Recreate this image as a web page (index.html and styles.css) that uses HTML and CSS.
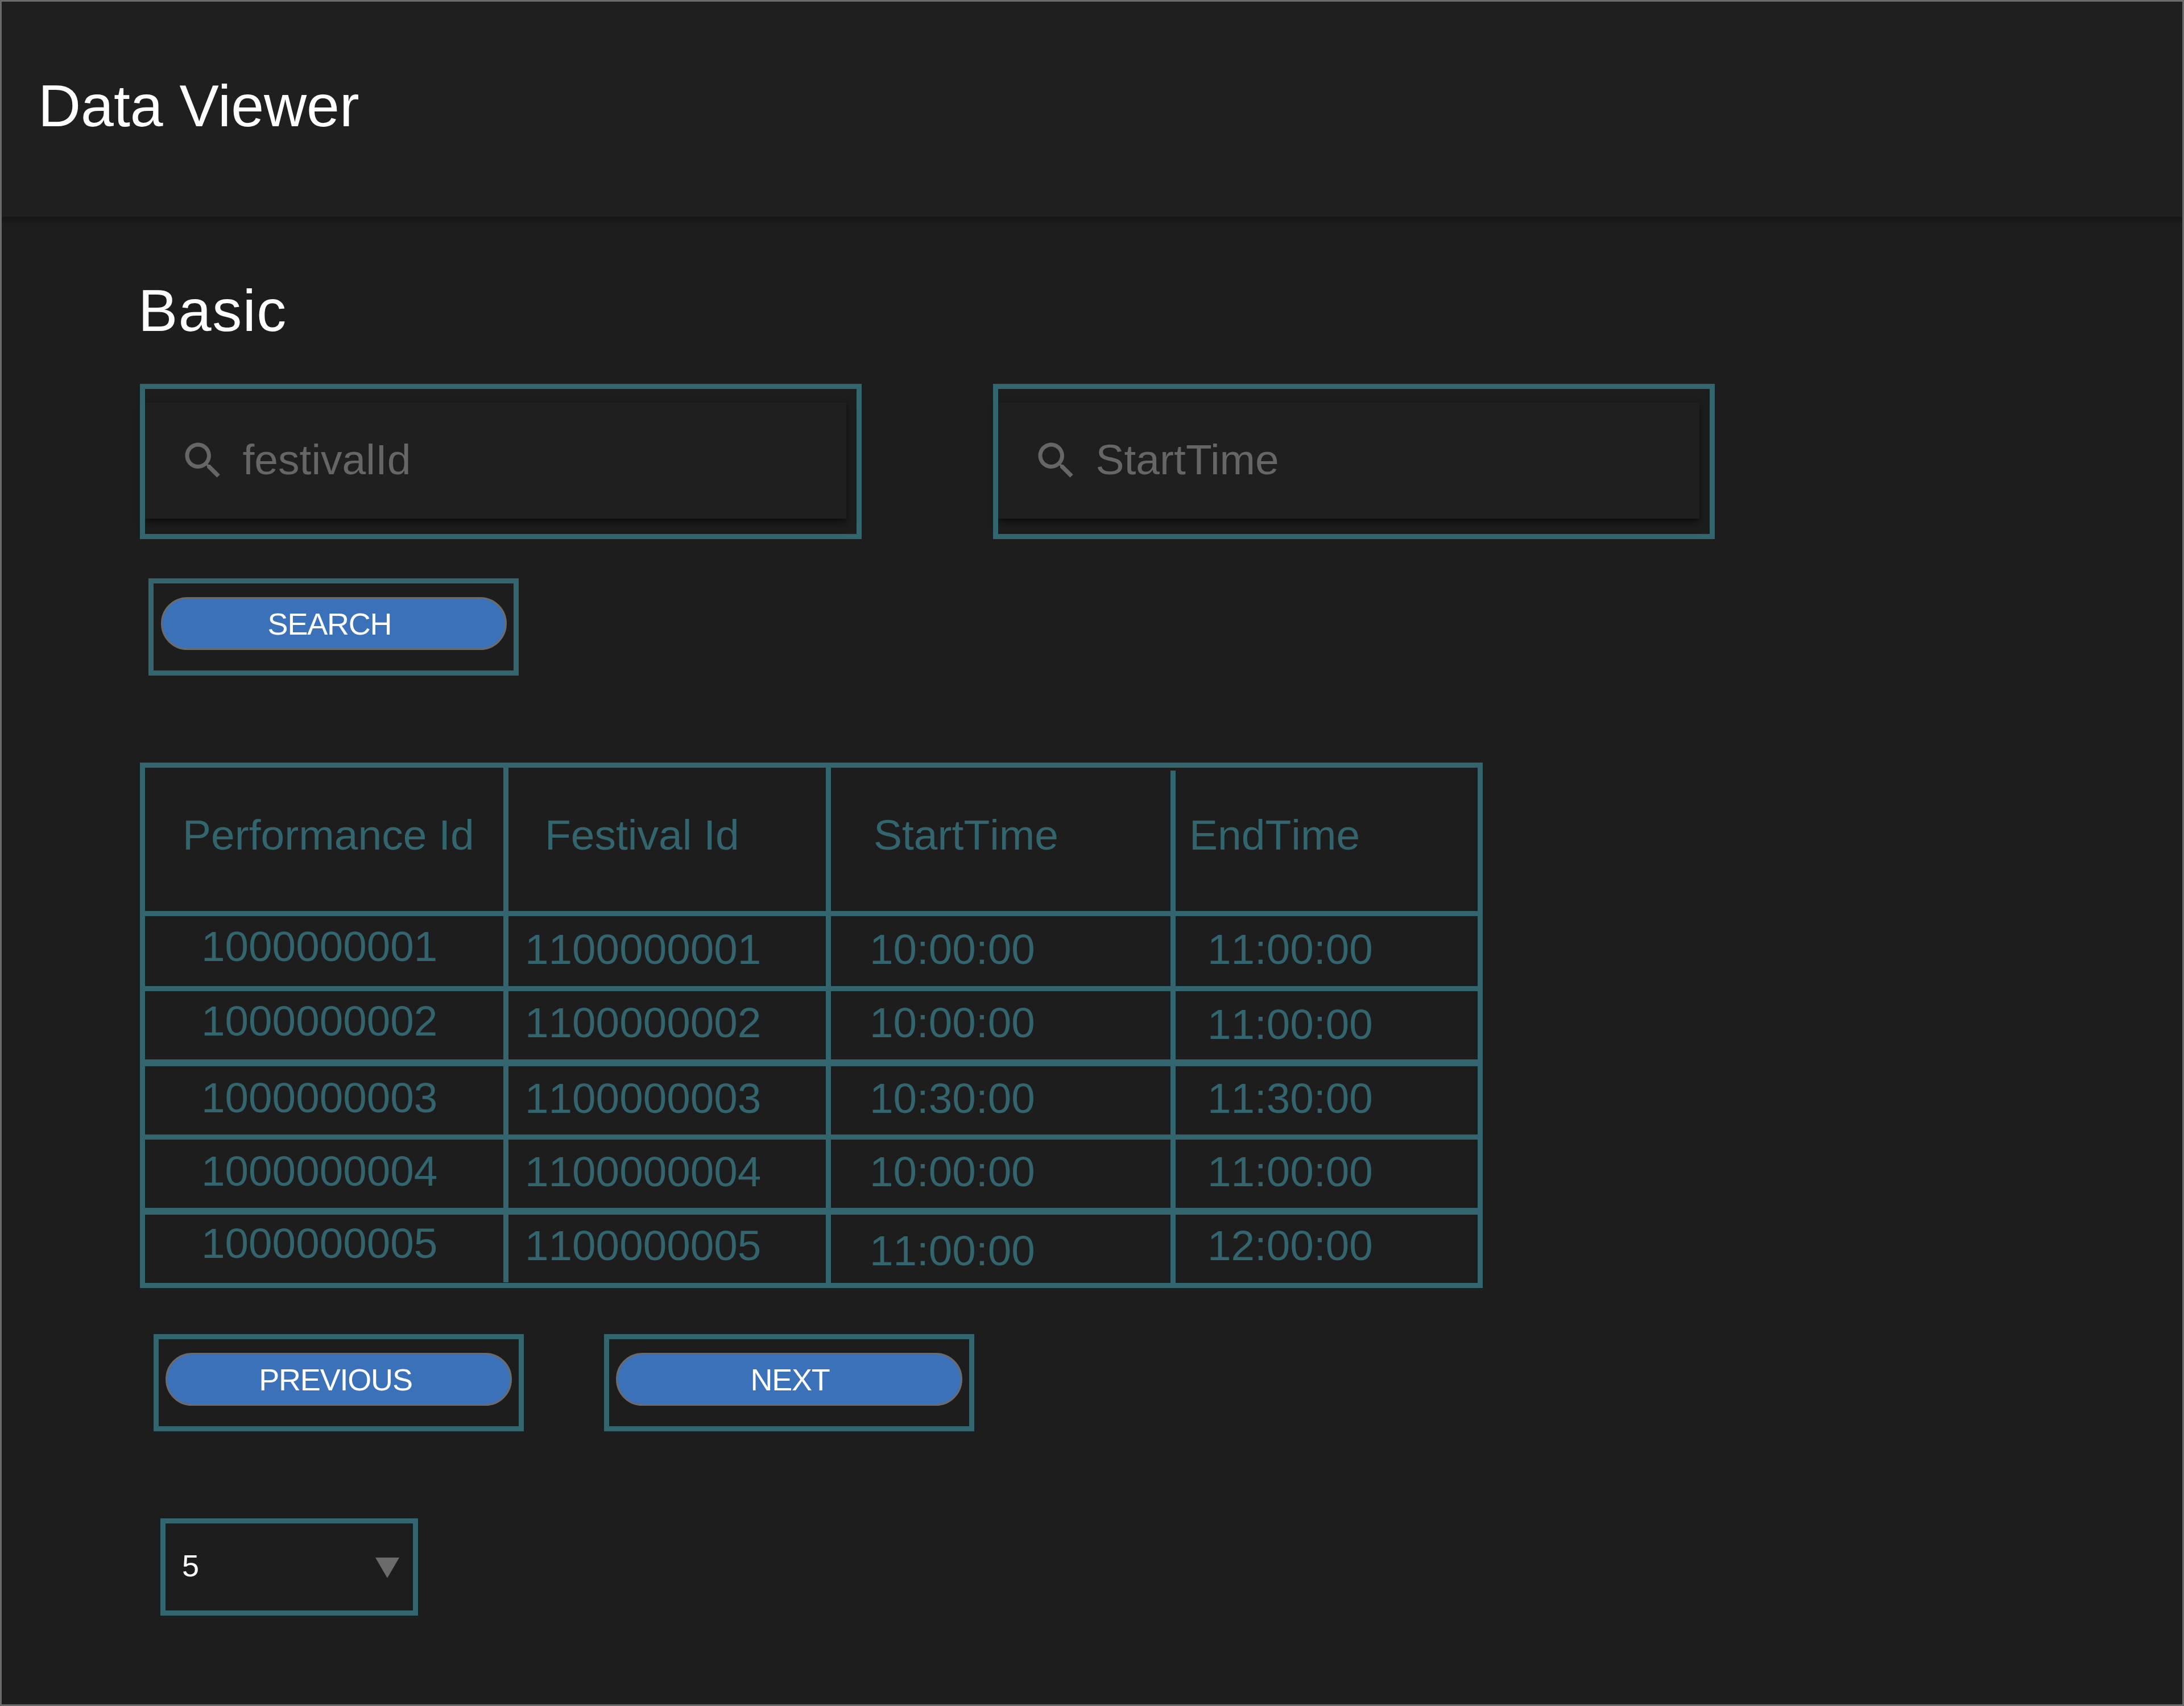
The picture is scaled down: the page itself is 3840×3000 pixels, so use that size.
FILE: index.html
```html
<!DOCTYPE html>
<html lang="en">
<head>
<meta charset="utf-8">
<title>Data Viewer</title>
<link rel="stylesheet" href="styles.css">
</head>
<body>
<div class="page">
  <header class="app-bar"><h1 class="app-title">Data Viewer</h1></header>
  <main class="content">
    <h2 class="section-title">Basic</h2>
    <div class="filters">
      <div class="frame filter">
        <div class="paper">
          <svg class="search-icon" viewBox="0 0 24 24"><path d="M15.5 14h-.79l-.28-.27C15.41 12.59 16 11.11 16 9.5 16 5.91 13.09 3 9.5 3S3 5.91 3 9.5 5.91 16 9.5 16c1.61 0 3.09-.59 4.23-1.57l.27.28v.79l5 4.99L20.49 19l-4.99-5zm-6 0C7.01 14 5 11.99 5 9.5S7.01 5 9.5 5 14 7.01 14 9.5 11.99 14 9.5 14z"/></svg>
          <span class="placeholder">festivalId</span>
        </div>
      </div>
      <div class="frame filter">
        <div class="paper">
          <svg class="search-icon" viewBox="0 0 24 24"><path d="M15.5 14h-.79l-.28-.27C15.41 12.59 16 11.11 16 9.5 16 5.91 13.09 3 9.5 3S3 5.91 3 9.5 5.91 16 9.5 16c1.61 0 3.09-.59 4.23-1.57l.27.28v.79l5 4.99L20.49 19l-4.99-5zm-6 0C7.01 14 5 11.99 5 9.5S7.01 5 9.5 5 14 7.01 14 9.5 11.99 14 9.5 14z"/></svg>
          <span class="placeholder">StartTime</span>
        </div>
      </div>
    </div>
    <div class="frame btn-frame search-frame"><button class="btn btn-search">SEARCH</button></div>
    <table class="data">
      <colgroup><col class="c1"><col class="c2"><col class="c3"><col class="c4"></colgroup>
      <thead>
        <tr class="head">
          <th class="h1">Performance Id</th>
          <th class="h2">Festival Id</th>
          <th class="h3">StartTime</th>
          <th class="h4">EndTime</th>
        </tr>
      </thead>
      <tbody>
        <tr class="r1"><td class="n1 y79">1000000001</td><td class="n2 y84">1100000001</td><td class="n3 y84">10:00:00</td><td class="n4 y84">11:00:00</td></tr>
        <tr class="r2"><td class="n1 y78">1000000002</td><td class="n2 y81">1100000002</td><td class="n3 y81">10:00:00</td><td class="n4 y84">11:00:00</td></tr>
        <tr class="r3"><td class="n1 y81">1000000003</td><td class="n2 y82">1100000003</td><td class="n3 y82">10:30:00</td><td class="n4 y82">11:30:00</td></tr>
        <tr class="r4"><td class="n1 y81">1000000004</td><td class="n2 y82">1100000004</td><td class="n3 y82">10:00:00</td><td class="n4 y82">11:00:00</td></tr>
        <tr class="r5"><td class="n1 y76">1000000005</td><td class="n2 y80">1100000005</td><td class="n3 y89">11:00:00</td><td class="n4 y80">12:00:00</td></tr>
      </tbody>
    </table>
    <div class="pager">
      <div class="frame btn-frame"><button class="btn btn-prev">PREVIOUS</button></div>
      <div class="frame btn-frame"><button class="btn btn-next">NEXT</button></div>
    </div>
    <div class="frame select">
      <span class="select-value">5</span>
      <svg class="select-arrow" viewBox="0 0 42 36"><polygon points="0,0 42,0 21,36"/></svg>
    </div>
  </main>
</div>
</body>
</html>
```
FILE: styles.css
```css
* { box-sizing: border-box; }
html { background: #1d1d1d; }
html, body { margin: 0; padding: 0; }
body { font-family: "Liberation Sans", Arial, sans-serif; color: #fff; }

.page {
  width: 3840px;
  height: 3000px;
  border: 3px solid #6b6b6b;
  overflow: hidden;
}

.app-bar {
  position: relative;
  margin: 0 -3px;
  height: 378px;
  padding: 132px 0 0 67px;
  background: #1f1f1f;
  box-shadow: 0 6px 12px rgba(0, 0, 0, .3);
}
.app-title, .section-title {
  margin: 0;
  font-size: 104px;
  line-height: 102px;
  font-weight: 400;
}

.content { padding: 114px 0 0 243px; }
.section-title { margin: 0 0 78px -3px; letter-spacing: 1.5px; }

.frame { border: 9px solid #32656e; }

.filters { display: flex; gap: 231px; margin-bottom: 69px; }
.filter { width: 1269px; height: 273px; padding: 24px 18px 0 0; }
.paper {
  position: relative;
  z-index: -1;
  height: 204px;
  display: flex;
  align-items: center;
  gap: 28px;
  padding-left: 59.5px;
  background: #1f1f1f;
  box-shadow: 0 9px 15px rgba(0, 0, 0, .35), 0 3px 6px rgba(0, 0, 0, .3);
}
.search-icon { width: 84px; height: 84px; fill: #666; flex: none; }
.placeholder {
  font-size: 75px;
  line-height: 75px;
  color: #666;
  padding-bottom: 4px;
}

.btn-frame { width: 651px; height: 171px; padding: 24px 12px 0; }
.search-frame { margin: 0 0 153px 15px; padding-left: 13px; }
.btn {
  display: block;
  width: 100%;
  height: 93px;
  margin: 0;
  border: 3px solid #6b6b6b;
  border-radius: 47px;
  background: #3a71b8;
  color: #fff;
  font-family: inherit;
  font-size: 54px;
  line-height: 54px;
  letter-spacing: -1.2px;
}
.btn-search { padding: 0 15px 0 0; }
.btn-prev { padding: 0 11px 0 0; }
.btn-next { padding: 0 0 0 3px; }

.data {
  width: 2361px;
  height: 924px;
  table-layout: fixed;
  border-collapse: separate;
  border-spacing: 0;
  border: 9px solid #32656e;
  color: #32656e;
  font-size: 75px;
  line-height: 75px;
  font-kerning: none;
}
.c1 { width: 639px; }
.c2 { width: 567px; }
.c3 { width: 606px; }
.c4 { width: 531px; }
.data th, .data td {
  padding: 0;
  font-weight: 400;
  text-align: left;
  vertical-align: top;
  white-space: nowrap;
  border-right: 9px solid #32656e;
  border-bottom: 9px solid #32656e;
}
.data td { font-size: 74.7px; }
.data th:last-child, .data td:last-child { border-right: 0; }
.data .r5 td { border-bottom: 0; }
.data .r2 td { border-bottom-width: 12px; }
.data .r4 td { border-bottom-width: 12px; }
.head { height: 261px; }
.r1 { height: 132px; }
.r2 { height: 132px; }
.r3 { height: 129px; }
.r4 { height: 132px; }
.r5 { height: 120px; }
.data th { padding-top: 81px; }
.data .h1 { padding-left: 66px; }
.data .h2 { padding-left: 64px; }
.data .h3 { padding-left: 75px; position: relative; }
.data .h4 { padding-left: 24px; }
.data .h3::after {
  content: "";
  position: absolute;
  top: 0;
  right: -9px;
  width: 9px;
  height: 5px;
  background: #1d1d1d;
}
.data .n1 { padding-left: 99px; }
.data .n2 { padding-left: 29px; }
.data .n3 { padding-left: 68px; }
.data .n4 { padding-left: 56px; }
.data .r5 .n1 { position: relative; }
.data .r5 .n1::after {
  content: "";
  position: absolute;
  bottom: 0;
  right: -9px;
  width: 9px;
  height: 1px;
  background: #1d1d1d;
}
.data .y76 { padding-top: 12.5px; }
.data .y78 { padding-top: 14.5px; }
.data .y79 { padding-top: 15.5px; }
.data .y80 { padding-top: 16.5px; }
.data .y81 { padding-top: 17.5px; }
.data .y82 { padding-top: 18.5px; }
.data .y84 { padding-top: 20.5px; }
.data .y89 { padding-top: 25.5px; }

.pager { display: flex; gap: 141px; margin: 81px 0 153px 24px; }

.select {
  width: 453px;
  height: 171px;
  margin-left: 36px;
  padding: 0 24px 0 29px;
  display: flex;
  align-items: center;
  justify-content: space-between;
}
.select-value { font-size: 54px; line-height: 54px; padding-bottom: 5px; }
.select-arrow { width: 42px; height: 36px; fill: #6b6b6b; margin-top: 3px; }
```
